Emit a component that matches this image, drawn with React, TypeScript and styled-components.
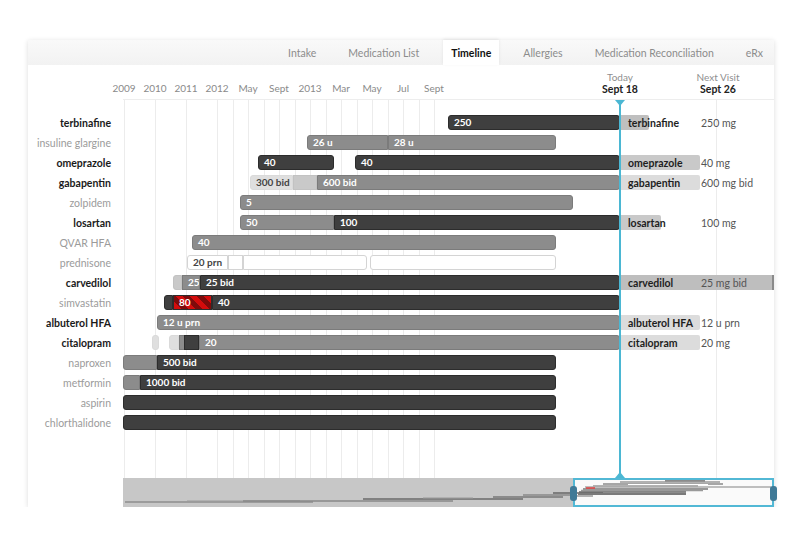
import React from "react";
import styled, { createGlobalStyle, css } from "styled-components";

const GlobalStyle = createGlobalStyle`
  html, body { margin: 0; padding: 0; background: #fff; }
  body { font-family: Lato, "Open Sans", sans-serif; color: #333; }
`;

type Kind = "dark" | "mid" | "light" | "pale" | "outline" | "red";
type Seg = [number, number, Kind, string?];
type Current = { width: number; tone: string; dose: string; edge?: boolean };
type Row = { name: string; bold?: boolean; segs: Seg[]; current?: Current };

const TODAY = 497;

const rows: Row[] = [
  { name: "terbinafine", bold: true, segs: [[325, 497, "dark", "250"]], current: { width: 29, tone: "#bfbfbf", dose: "250 mg" } },
  { name: "insuline glargine", segs: [[184, 265, "mid", "26 u"], [265, 433, "mid", "28 u"]] },
  { name: "omeprazole", bold: true, segs: [[135, 211, "dark", "40"], [232, 497, "dark", "40"]], current: { width: 80, tone: "#c9c9c9", dose: "40 mg" } },
  { name: "gabapentin", bold: true, segs: [[127, 170, "pale", "300 bid"], [170, 194, "light"], [194, 497, "mid", "600 bid"]], current: { width: 80, tone: "#dcdcdc", dose: "600 mg bid" } },
  { name: "zolpidem", segs: [[117, 450, "mid", "5"]] },
  { name: "losartan", bold: true, segs: [[117, 211, "mid", "50"], [211, 497, "dark", "100"]], current: { width: 41, tone: "#c9c9c9", dose: "100 mg" } },
  { name: "QVAR HFA", segs: [[69, 433, "mid", "40"]] },
  { name: "prednisone", segs: [[64, 105, "outline", "20 prn"], [105, 120, "outline"], [120, 244, "outline"], [247, 433, "outline"]] },
  { name: "carvedilol", bold: true, segs: [[50, 59, "light"], [59, 77, "mid", "25"], [77, 497, "dark", "25 bid"]], current: { width: 154, tone: "#bebebe", dose: "25 mg bid", edge: true } },
  { name: "simvastatin", segs: [[41, 50, "dark"], [50, 89, "red", "80"], [89, 497, "dark", "40"]] },
  { name: "albuterol HFA", bold: true, segs: [[34, 497, "mid", "12 u prn"]], current: { width: 80, tone: "#dcdcdc", dose: "12 u prn" } },
  { name: "citalopram", bold: true, segs: [[29, 36, "pale"], [46, 56, "pale"], [56, 61, "mid"], [61, 76, "dark"], [76, 497, "mid", "20"]], current: { width: 80, tone: "#dcdcdc", dose: "20 mg" } },
  { name: "naproxen", segs: [[0, 34, "mid"], [34, 433, "dark", "500 bid"]] },
  { name: "metformin", segs: [[0, 17, "mid"], [17, 433, "dark", "1000 bid"]] },
  { name: "aspirin", segs: [[0, 433, "dark"]] },
  { name: "chlorthalidone", segs: [[0, 433, "dark"]] },
];

const axis = ["2009", "2010", "2011", "2012", "May", "Sept", "2013", "Mar", "May", "Jul", "Sept"];
const gridlines = [1, 32, 63, 94, 110, 125, 141, 156, 172, 187, 203, 218, 234, 249, 265, 280, 296, 311, 593];
const tabs = ["Intake", "Medication List", "Timeline", "Allergies", "Medication Reconciliation", "eRx"];

// thumbnail strokes for the overview strip: [x1, x2, y, colour, thickness]
const miniLines: [number, number, number, string, number][] = [
  [2, 190, 24, "#8e8e8e", 1.5],
  [64, 177, 23, "#9a9a9a", 1],
  [120, 330, 23, "#888", 1.5],
  [240, 400, 21, "#6a6a6a", 1.5],
  [300, 350, 20, "#999", 1],
  [370, 440, 19, "#777", 1.5],
  [400, 450, 17, "#888", 1.5],
  [430, 480, 15, "#666", 1.5],
  [452, 470, 18, "#999", 1],
  [542, 582, 3, "#666", 1.5],
  [497, 597, 4, "#999", 1.5],
  [480, 600, 6, "#8a8a8a", 1.5],
  [505, 585, 6.5, "#fff", 1],
  [470, 575, 8, "#999", 1.5],
  [462, 648, 9, "#aaa", 1.5],
  [460, 585, 11, "#777", 1.5],
  [463, 472, 10, "#e04040", 1.5],
  [458, 580, 12.5, "#999", 1.5],
  [456, 563, 14, "#666", 1.5],
  [455, 563, 16, "#7a7a7a", 2],
  [453, 470, 18, "#999", 1],
];

const Page = styled.div`
  padding: 40px 0 0 28px;
`;

const Card = styled.div`
  width: 746px;
  box-shadow: 0 1px 5px rgba(0, 0, 0, 0.14);
`;

const TabBar = styled.div`
  display: flex;
  justify-content: flex-end;
  height: 25px;
  padding-right: 0;
  background: linear-gradient(#f9f9f9, #f2f2f2);
`;

const Tab = styled.div<{ $active?: boolean }>`
  display: flex;
  align-items: center;
  padding: 0 16px;
  font-size: 10.5px;
  color: #8c8c8c;
  white-space: nowrap;
  &:last-child {
    padding-right: 11px;
  }
  ${(p) =>
    p.$active &&
    css`
      background: #fff;
      color: #111;
      font-weight: 700;
      padding: 0 8px;
      margin: 0 8px;
      box-shadow: 0 -1px 3px rgba(0, 0, 0, 0.08);
    `}
`;

const Panel = styled.div`
  display: grid;
  grid-template-columns: 95px 651px;
  height: 442px;
  background: #fff;
`;

const LabelColumn = styled.div`
  padding-top: 48px;
`;

const RowLabel = styled.div<{ $bold?: boolean }>`
  height: 20px;
  line-height: 20px;
  padding-right: 12px;
  text-align: right;
  font-size: 10.5px;
  white-space: nowrap;
  color: ${(p) => (p.$bold ? "#1a1a1a" : "#9b9b9b")};
  font-weight: ${(p) => (p.$bold ? 700 : 400)};
`;

const ChartColumn = styled.div`
  display: flex;
  flex-direction: column;
`;

const ChartHeader = styled.div`
  display: flex;
  align-items: flex-start;
  height: 35px;
  box-sizing: border-box;
  border-bottom: 1px solid #ededed;
`;

const AxisRow = styled.div`
  display: flex;
  width: ${TODAY - 40}px;
  margin-left: -14.5px;
  padding-top: 16px;
`;

const AxisLabel = styled.div`
  width: 31px;
  text-align: center;
  font-size: 10px;
  line-height: 14px;
  color: #8a8a8a;
`;

const Markers = styled.div`
  display: flex;
  gap: 18px;
  padding-top: 6px;
  margin-left: 14.5px;
`;

const Marker = styled.div`
  width: 80px;
  text-align: center;
  line-height: 12px;
`;

const MarkerTitle = styled.div`
  font-size: 10px;
  color: #8f8f8f;
`;

const MarkerDate = styled.div`
  font-size: 10.5px;
  font-weight: 700;
  color: #222;
`;

const ChartBody = styled.div`
  position: relative;
  height: 378px;
  padding-top: 13px;
  box-sizing: border-box;
`;

const Gridline = styled.div`
  position: absolute;
  top: 0;
  bottom: 0;
  width: 1px;
  background: #ececec;
`;

const Track = styled.div`
  display: grid;
  grid-template-columns: ${TODAY}px 1fr;
  height: 20px;
`;

const BarLane = styled.div`
  position: relative;
`;

const CurrentCell = styled.div`
  position: relative;
  display: flex;
  align-items: center;
  padding-left: 8px;
  font-size: 10.5px;
  white-space: nowrap;
`;

const kindStyles: Record<Kind, ReturnType<typeof css>> = {
  dark: css`background: #3f3f3f; border-color: #2c2c2c; color: #fff;`,
  mid: css`background: #8c8c8c; border-color: #7b7b7b; color: #fff;`,
  light: css`background: #c9c9c9; border-color: #c2c2c2; color: #444;`,
  pale: css`background: #dfdfdf; border-color: #dadada; color: #444;`,
  outline: css`background: #fff; border-color: #d4d4d4; color: #444;`,
  red: css`
    background: repeating-linear-gradient(45deg, #d40c0c 0 5px, #7e0b0b 5px 10px);
    border-color: #2c2c2c;
    color: #fff;
  `,
};

const Bar = styled.div<{ $kind: Kind; $roundL: boolean; $roundR: boolean }>`
  position: absolute;
  top: 2px;
  height: 15px;
  box-sizing: border-box;
  border: 1px solid;
  padding-left: 5px;
  font-size: 10px;
  font-weight: 700;
  line-height: 13px;
  white-space: nowrap;
  overflow: hidden;
  border-radius: ${(p) => `${p.$roundL ? 3 : 0}px ${p.$roundR ? 3 : 0}px ${p.$roundR ? 3 : 0}px ${p.$roundL ? 3 : 0}px`};
  ${(p) => kindStyles[p.$kind]}
`;

const CurrentBox = styled.div<{ $tone: string; $edge?: boolean }>`
  position: absolute;
  top: 2px;
  left: 0;
  height: 15px;
  background: ${(p) => p.$tone};
  border-radius: ${(p) => (p.$edge ? "0" : "0 2px 2px 0")};
  box-sizing: border-box;
  ${(p) => p.$edge && css`border-right: 2px solid #8a8a8a;`}
`;

const CurrentName = styled.span`
  position: relative;
  width: 73px;
  font-weight: 700;
  color: #1e1e1e;
`;

const CurrentDose = styled.span`
  position: relative;
  color: #555;
`;

const TodayLine = styled.div`
  position: absolute;
  top: 0;
  bottom: 0;
  left: ${TODAY - 1}px;
  width: 2px;
  background: #4bb7d3;
  z-index: 2;
`;

const Arrow = styled.div<{ $up?: boolean }>`
  position: absolute;
  left: -4px;
  width: 0;
  height: 0;
  border-left: 5px solid transparent;
  border-right: 5px solid transparent;
  ${(p) =>
    p.$up
      ? css`bottom: 0; border-bottom: 6px solid #4bb7d3;`
      : css`top: 0; border-top: 6px solid #4bb7d3;`}
`;

const Overview = styled.div`
  position: relative;
  display: flex;
  height: 29px;
`;

const OverviewPast = styled.div`
  width: 450px;
  background: #c7c7c7;
`;

const OverviewWindow = styled.div`
  position: relative;
  flex: 1;
  box-sizing: border-box;
  border: 2px solid #52b8d5;
  background: #fafafa;
`;

const Handle = styled.div<{ $side: "left" | "right" }>`
  position: absolute;
  top: 6px;
  ${(p) => p.$side}: -5px;
  width: 7px;
  height: 15px;
  border-radius: 3px;
  background: #3f7a97;
  z-index: 3;
`;

const Thumb = styled.svg`
  position: absolute;
  left: 0;
  top: 0;
  z-index: 2;
  pointer-events: none;
`;

function TimelineRow({ row }: { row: Row }) {
  return (
    <Track>
      <BarLane>
        {row.segs.map(([a, b, kind, text], i) => (
          <Bar
            key={i}
            $kind={kind}
            $roundL={!row.segs.some((s) => s[1] === a)}
            $roundR={!row.segs.some((s) => s[0] === b)}
            style={{ left: a, width: b - a }}
          >
            {text}
          </Bar>
        ))}
      </BarLane>
      {row.current ? (
        <CurrentCell>
          <CurrentBox $tone={row.current.tone} $edge={row.current.edge} style={{ width: row.current.width }} />
          <CurrentName>{row.name}</CurrentName>
          <CurrentDose>{row.current.dose}</CurrentDose>
        </CurrentCell>
      ) : (
        <CurrentCell />
      )}
    </Track>
  );
}

export default function App() {
  return (
    <>
      <GlobalStyle />
      <Page>
        <Card>
          <TabBar>
            {tabs.map((t) => (
              <Tab key={t} $active={t === "Timeline"}>
                {t}
              </Tab>
            ))}
          </TabBar>
          <Panel>
            <LabelColumn>
              {rows.map((r) => (
                <RowLabel key={r.name} $bold={r.bold}>
                  {r.name}
                </RowLabel>
              ))}
            </LabelColumn>
            <ChartColumn>
              <ChartHeader>
                <AxisRow>
                  {axis.map((a, i) => (
                    <AxisLabel key={i}>{a}</AxisLabel>
                  ))}
                </AxisRow>
                <Markers>
                  <Marker>
                    <MarkerTitle>Today</MarkerTitle>
                    <MarkerDate>Sept 18</MarkerDate>
                  </Marker>
                  <Marker>
                    <MarkerTitle>Next Visit</MarkerTitle>
                    <MarkerDate>Sept 26</MarkerDate>
                  </Marker>
                </Markers>
              </ChartHeader>
              <ChartBody>
                {gridlines.map((x) => (
                  <Gridline key={x} style={{ left: x }} />
                ))}
                {rows.map((r) => (
                  <TimelineRow key={r.name} row={r} />
                ))}
                <TodayLine>
                  <Arrow />
                  <Arrow $up />
                </TodayLine>
              </ChartBody>
              <Overview>
                <OverviewPast />
                <OverviewWindow>
                  <Handle $side="left" />
                  <Handle $side="right" />
                </OverviewWindow>
                <Thumb width="651" height="29" viewBox="0 0 651 29">
                  {miniLines.map(([x1, x2, y, c, w], i) => (
                    <line key={i} x1={x1} x2={x2} y1={y} y2={y} stroke={c} strokeWidth={w} />
                  ))}
                </Thumb>
              </Overview>
            </ChartColumn>
          </Panel>
        </Card>
      </Page>
    </>
  );
}
